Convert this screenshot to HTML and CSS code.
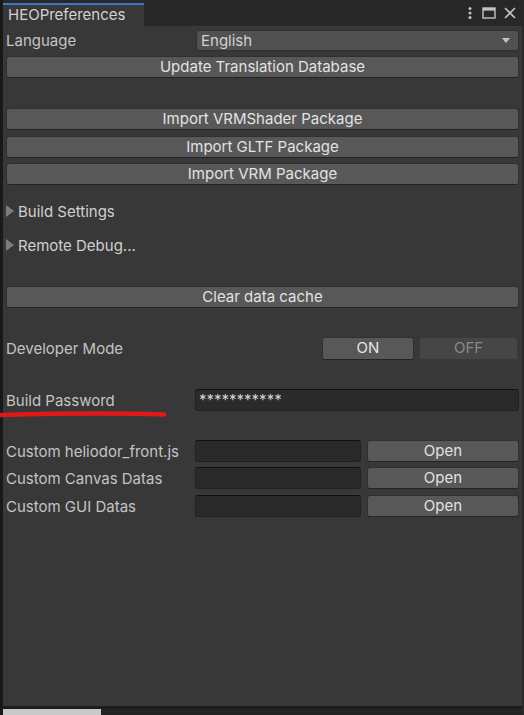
FILE: index.html
```html
<!DOCTYPE html>
<html>
<head>
<meta charset="utf-8">
<link rel="stylesheet" href="styles.css">
</head>
<body>
<div class="window">
  <div class="header">
    <div class="tab">HEOPreferences</div>
    <div class="header-icons">
      <svg class="ico" width="10" height="14" viewBox="0 0 10 14"><circle cx="5" cy="2.5" r="1.5" fill="#c4c4c4"/><circle cx="5" cy="7" r="1.5" fill="#c4c4c4"/><circle cx="5" cy="11.5" r="1.5" fill="#c4c4c4"/></svg>
      <svg class="ico" width="14" height="14" viewBox="0 0 14 14"><rect x="1" y="2" width="12" height="10" fill="none" stroke="#c4c4c4" stroke-width="1.4"/><rect x="1" y="2" width="12" height="2.6" fill="#c4c4c4"/></svg>
      <svg class="ico" width="14" height="14" viewBox="0 0 14 14"><path d="M2 2 L12 12 M12 2 L2 12" stroke="#c4c4c4" stroke-width="1.6"/></svg>
    </div>
  </div>
  <div class="content">
    <div class="row lang-row">
      <div class="label">Language</div>
      <div class="dropdown"><span>English</span><svg width="8" height="5" viewBox="0 0 8 5"><path d="M0 0 H8 L4 5 Z" fill="#c4c4c4"/></svg></div>
    </div>
    <div class="btn full m5">Update Translation Database</div>
    <div class="btn full m30">Import VRMShader Package</div>
    <div class="btn full m6">Import GLTF Package</div>
    <div class="btn full m5">Import VRM Package</div>
    <div class="foldout m16"><svg width="8" height="12" viewBox="0 0 8 12"><path d="M0 0 L8 6 L0 12 Z" fill="#7d7d7d"/></svg>Build Settings</div>
    <div class="foldout m14"><svg width="8" height="12" viewBox="0 0 8 12"><path d="M0 0 L8 6 L0 12 Z" fill="#7d7d7d"/></svg>Remote Debug...</div>
    <div class="btn full m31">Clear data cache</div>
    <div class="row dev-row">
      <div class="label">Developer Mode</div>
      <div class="btn on">ON</div>
      <div class="btn off">OFF</div>
    </div>
    <div class="row pw-row">
      <div class="label pw-label">Build Password</div>
      <div class="field pw">***********</div>
    </div>
    <div class="row custom m29">
      <div class="label">Custom heliodor_front.js</div>
      <div class="field small"></div>
      <div class="btn open">Open</div>
    </div>
    <div class="row custom m5">
      <div class="label">Custom Canvas Datas</div>
      <div class="field small"></div>
      <div class="btn open">Open</div>
    </div>
    <div class="row custom m6">
      <div class="label">Custom GUI Datas</div>
      <div class="field small"></div>
      <div class="btn open">Open</div>
    </div>
  </div>
  <div class="bottom-line"></div>
  <div class="bottom"><div class="thumb"></div></div>
</div>
<svg class="redline" width="170" height="14" viewBox="0 0 170 14"><path d="M1 7 C 40 6, 100 4.5, 164 6.5" stroke="#e01818" stroke-width="4.5" fill="none" stroke-linecap="round"/></svg>
</body>
</html>
```
FILE: styles.css
```css
html, body {
  margin: 0;
  padding: 0;
}
body {
  width: 524px;
  height: 715px;
  background: #383838;
  font-family: Inter, "Noto Sans", sans-serif;
  font-size: 15px;
  color: #c4c4c4;
  position: relative;
  overflow: hidden;
}
.window {
  height: 715px;
  display: flex;
  flex-direction: column;
  border-left: 3px solid #191919;
  border-right: 2px solid #2a2a2a;
  box-sizing: border-box;
}
.header {
  height: 26px;
  background: #282828;
  display: flex;
  align-items: flex-end;
  justify-content: space-between;
  flex: none;
}
.tab {
  width: 141px;
  height: 23px;
  box-sizing: border-box;
  background: #383838;
  border-top: 2px solid #3a78c0;
  padding-left: 5px;
  line-height: 20px;
  color: #d2d2d2;
}
.header-icons {
  display: flex;
  align-items: center;
  gap: 7px;
  height: 26px;
  padding-right: 5px;
}
.ico { display: block; }
.content {
  flex: 1;
  padding: 4px 3px 0 3px;
}
.row {
  display: flex;
  align-items: center;
}
.label {
  width: 189px;
  flex: none;
  white-space: nowrap;
}
.lang-row { height: 21px; }
.dropdown {
  flex: 1;
  height: 21px;
  box-sizing: border-box;
  background: #515151;
  border: 1px solid #303030;
  border-radius: 3px;
  display: flex;
  align-items: center;
  justify-content: space-between;
  padding: 0 8px 0 4px;
  color: #d2d2d2;
  margin-left: 1px;
}
.btn {
  height: 22px;
  box-sizing: border-box;
  background: #585858;
  border: 1px solid #303030;
  border-bottom-color: #242424;
  border-radius: 3px;
  color: #e2e2e2;
  text-align: center;
  line-height: 20px;
}
.full { width: 100%; }
.m5 { margin-top: 5px; }
.m6 { margin-top: 6px; }
.m14 { margin-top: 14px; }
.m16 { margin-top: 16px; }
.m29 { margin-top: 29px; }
.m30 { margin-top: 30px; }
.m31 { margin-top: 31px; }
.foldout {
  height: 20px;
  display: flex;
  align-items: center;
  gap: 4px;
  color: #d0d0d0;
}
.dev-row {
  margin-top: 29px;
  height: 23px;
}
.dev-row .label { flex: 1; width: auto; }
.on {
  width: 92px;
  height: 23px;
  color: #e6e6e6;
}
.off {
  width: 99px;
  height: 23px;
  margin-left: 5px;
  margin-right: 1px;
  background: #464646;
  border-color: #3a3a3a;
  color: #8a8a8a;
}
.pw-row {
  margin-top: 29px;
  height: 22px;
}
.field {
  height: 22px;
  box-sizing: border-box;
  background: #2a2a2a;
  border: 1px solid #212121;
  border-top-color: #0f0f0f;
  border-radius: 3px;
  color: #d2d2d2;
  padding-left: 3px;
  line-height: 19px;
}
.pw { flex: 1; }
.custom { height: 22px; }
.small { width: 166px; flex: none; }
.open {
  flex: 1;
  margin-left: 6px;
}
.bottom-line {
  height: 3px;
  background: #1c1c1c;
  flex: none;
}
.bottom {
  height: 6px;
  background: #232323;
  flex: none;
}
.thumb {
  width: 98px;
  height: 6px;
  background: #c9c9c9;
}
.redline {
  position: absolute;
  left: 0;
  top: 408px;
}
```
